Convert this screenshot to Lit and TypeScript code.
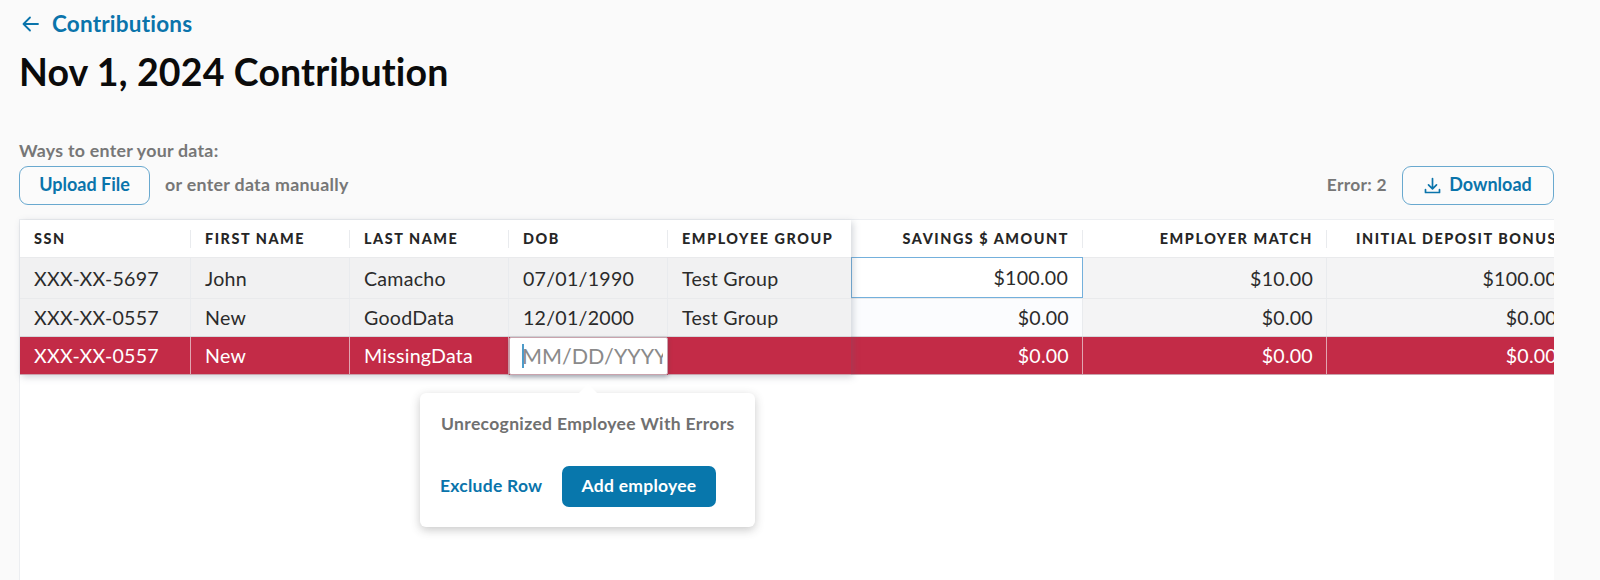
import { LitElement, html, css, svg } from "lit";
import { customElement } from "lit/decorators.js";

const frozenCols = [171, 159, 159, 159, 183];
const scrollCols = [232, 244, 244];
const frozenHead = ["SSN", "FIRST NAME", "LAST NAME", "DOB", "EMPLOYEE GROUP"];
const scrollHead = ["SAVINGS $ AMOUNT", "EMPLOYER MATCH", "INITIAL DEPOSIT BONUS"];
const rows = [
  { cls: "r1", f: ["XXX-XX-5697", "John", "Camacho", "07/01/1990", "Test Group"], s: ["$100.00", "$10.00", "$100.00"] },
  { cls: "r2", f: ["XXX-XX-0557", "New", "GoodData", "12/01/2000", "Test Group"], s: ["$0.00", "$0.00", "$0.00"] },
  { cls: "r3 err", f: ["XXX-XX-0557", "New", "MissingData", "", ""], s: ["$0.00", "$0.00", "$0.00"] },
];
const tpl = (c: number[]) => c.map((w) => w + "px").join(" ");

@customElement("app-root")
export class AppRoot extends LitElement {
  static styles = css`
    :host { display: block; width: 1600px; height: 580px; overflow: hidden; background: #fafafa; font-family: "Lato", "Open Sans", sans-serif; color: #2a2a2a; }
    .page { padding: 0 46px 0 19px; display: flex; flex-direction: column; height: 580px; box-sizing: border-box; }
    .back { display: flex; align-items: center; gap: 13px; height: 24px; margin-top: 12px; padding-left: 3px; color: #0a74ab; font-size: 22.5px; font-weight: 700; letter-spacing: 0.2px; }
    .back span { padding-bottom: 2px; }
    h1 { margin: 11px 0 0; font-size: 37.5px; line-height: 50px; font-weight: 700; color: #0b0b0b; letter-spacing: 0.15px; }
    .ways { margin-top: 43px; font-size: 17.8px; line-height: 20px; font-weight: 700; color: #777; letter-spacing: 0.25px; }
    .bar { display: flex; align-items: center; margin-top: 6px; height: 39px; }
    .btn { display: flex; align-items: center; justify-content: center; gap: 8px; box-sizing: border-box; height: 39px; border: 1px solid #69a9cf; border-radius: 9px; background: #fbfbfb; color: #0a74ab; font-size: 18px; font-weight: 700; }
    .btn span { padding-bottom: 3px; }
    .upload { width: 131px; }
    .manual { margin-left: 15px; padding-bottom: 3px; font-size: 17.8px; font-weight: 700; color: #777; letter-spacing: 0.3px; }
    .err-count { margin-left: auto; margin-right: 15px; padding-bottom: 2px; font-size: 17.4px; font-weight: 700; color: #777; letter-spacing: 0.3px; }
    .download { width: 152px; font-weight: 700; }
    .table { position: relative; display: flex; flex: 1; margin-top: 14px; background: #fff; border: 1px solid #eceef1; border-bottom: 0; border-right: 0; box-sizing: border-box; }
    .frozen { position: relative; z-index: 2; flex: none; align-self: flex-start; box-shadow: 2px 2px 7px rgba(90, 100, 120, 0.28); }
    .scroll { flex: 1; min-width: 0; overflow: hidden; align-self: stretch; }
    .grid { display: grid; grid-template-rows: 37px 41px 38px 39px; }
    .head { display: flex; align-items: center; background: #fff; padding: 0 14px; font-size: 14.4px; font-weight: 900; letter-spacing: 1.55px; white-space: nowrap; color: #262626; position: relative; }
    .head.sep::after, .cell.sep::after { content: ""; position: absolute; right: 0; width: 1px; background: #e9ebee; }
    .head.sep::after { top: 10px; bottom: 9px; }
    .cell.sep::after { top: 0; bottom: 0; }
    .head.right, .cell.right { justify-content: flex-end; }
    .cell { display: flex; align-items: center; position: relative; padding: 0 14px; font-size: 19.6px; letter-spacing: 0.25px; white-space: nowrap; color: #2b2b2b; background: #f1f1f2; border-top: 1px solid #e9eaec; box-sizing: border-box; }
    .scroll .cell { background: #f4f4f5; }
    .scroll .cell.plain { background: #fbfcfe; }
    .scroll .cell.focus { background: #fff; border: 1px solid #74b0dc; }
    .cell.err, .scroll .cell.err { background: #c32b47; color: #fff; border-top: 1px solid #d5d7da; border-bottom: 1px solid #c9a3ad; }
    .cell.err.sep::after { background: #e1a5b1; }
    .date-wrap { background: #c32b47; border-top: 1px solid #d5d7da; box-sizing: border-box; display: flex; }
    .date { flex: 1; min-width: 0; background: #fff; border: 1px solid #c9a3ad; border-radius: 2px; padding: 0 0 0 12px; margin: 0; box-shadow: 0 2px 4px rgba(60, 70, 90, 0.35); position: relative; z-index: 1; overflow: hidden; color: #8a8a8a; font-size: 21.5px; letter-spacing: 0; justify-content: flex-start; }
    .date .mask { display: block; width: 141px; overflow: hidden; }
    .date .caret { position: absolute; left: 12px; top: 6px; bottom: 6px; width: 1.5px; background: #4d9bc9; }
    .pop { position: absolute; z-index: 3; left: 400px; top: 173px; width: 335px; height: 134px; box-sizing: border-box; padding: 20px 21px; background: #fff; border-radius: 6px; box-shadow: 0 3px 10px rgba(60, 60, 60, 0.28); }
    .pop::before { content: ""; position: absolute; left: 159px; top: -9px; width: 18px; height: 18px; background: #fff; clip-path: polygon(50% 0, 100% 50%, 0 50%); }
    .pop-title { font-size: 17.5px; line-height: 22px; font-weight: 700; color: #707070; letter-spacing: 0.35px; white-space: nowrap; }
    .actions { display: flex; align-items: center; margin-top: 31px; margin-left: -1px; }
    .exclude { color: #0a74ab; font-size: 17.5px; font-weight: 700; letter-spacing: 0.25px; width: 122px; padding-bottom: 3px; box-sizing: content-box; }
    .add { width: 154px; height: 41px; box-sizing: border-box; padding-bottom: 3px; display: flex; align-items: center; justify-content: center; background: #0877ac; color: #fff; border-radius: 7px; font-size: 17.5px; font-weight: 700; letter-spacing: 0.25px; }
  `;

  private cell(v: string, r: { cls: string }, i: number, n: number, right: boolean, extra = "") {
    const sep = i < n - 1 ? "sep" : "";
    return html`<div class="cell ${r.cls} ${sep} ${right ? "right" : ""} ${extra}">${v}</div>`;
  }

  render() {
    return html`<div class="page">
      <div class="back">
        <svg width="17" height="16" viewBox="0 0 17 16" fill="none" stroke="#0a74ab" stroke-width="1.8" stroke-linecap="round" stroke-linejoin="round">${svg`<path d="M16 8H1.5M8 1.5 1.5 8 8 14.5"/>`}</svg>
        <span>Contributions</span>
      </div>
      <h1>Nov 1, 2024 Contribution</h1>
      <div class="ways">Ways to enter your data:</div>
      <div class="bar">
        <div class="btn upload"><span>Upload File</span></div>
        <div class="manual">or enter data manually</div>
        <div class="err-count">Error: 2</div>
        <div class="btn download">
          <svg width="17" height="17" viewBox="0 0 17 17" fill="none" stroke="#0a74ab" stroke-width="1.7" stroke-linecap="round" stroke-linejoin="round">${svg`<path d="M8.5 1.5v10M4.5 7.8l4 4 4-4M1.5 12.5v3h14v-3"/>`}</svg>
          <span>Download</span>
        </div>
      </div>
      <div class="table">
        <div class="frozen">
          <div class="grid" style="grid-template-columns:${tpl(frozenCols)}">
            ${frozenHead.map((h, i) => html`<div class="head ${i < 4 ? "sep" : ""}">${h}</div>`)}
            ${rows.map((r) =>
              r.f.map((v, i) =>
                r.cls.includes("err") && i === 3
                  ? html`<div class="date-wrap"><div class="cell date"><span class="mask">MM/DD/YYYY</span><span class="caret"></span></div></div>`
                  : this.cell(v, r, i, 5, false)
              )
            )}
          </div>
        </div>
        <div class="scroll">
          <div class="grid" style="grid-template-columns:${tpl(scrollCols)}">
            ${scrollHead.map((h, i) => html`<div class="head right ${i < 2 ? "sep" : ""}">${h}</div>`)}
            ${rows.map((r, ri) =>
              r.s.map((v, i) => {
                const extra = i === 0 && ri === 0 ? "focus" : i === 0 && ri === 1 ? "plain" : "";
                return this.cell(v, r, extra === "focus" ? 3 : i, 3, true, extra);
              })
            )}
          </div>
        </div>
        <div class="pop">
          <div class="pop-title">Unrecognized Employee With Errors</div>
          <div class="actions">
            <div class="exclude">Exclude Row</div>
            <div class="add">Add employee</div>
          </div>
        </div>
      </div>
    </div>`;
  }
}
